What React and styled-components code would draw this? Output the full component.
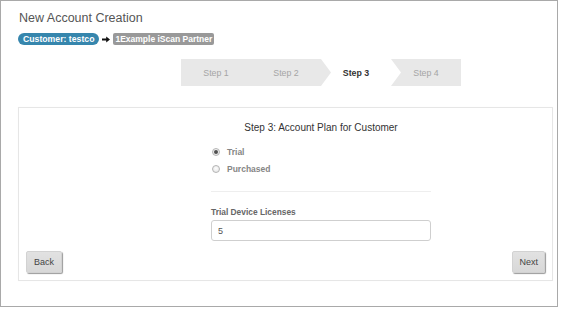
import React from "react";
import styled, { createGlobalStyle } from "styled-components";

const Global = createGlobalStyle`
  html, body { margin: 0; padding: 0; background: #fff; }
  body { font-family: "Liberation Sans", Arial, sans-serif; }
  * { box-sizing: border-box; }
`;

const Frame = styled.div`
  width: 558px;
  height: 307px;
  border: 1px solid #a9a9a9;
  padding: 9px 0 0 17px;
  display: flex;
  flex-direction: column;
`;

const Title = styled.h1`
  margin: 0 0 0 1px;
  font-size: 12.5px;
  line-height: 16px;
  font-weight: normal;
  color: #555;
`;

const Crumbs = styled.div`
  display: flex;
  align-items: center;
  gap: 3px;
  margin-top: 7px;
  height: 12px;
`;

const Badge = styled.span`
  display: inline-flex;
  align-items: center;
  height: 12px;
  padding: 0 ${(p) => (p.$pill ? "5px" : "2px")};
  border-radius: ${(p) => (p.$pill ? "6px" : "2px")};
  background: ${(p) => p.$bg};
  color: #fff;
  font-size: ${(p) => (p.$pill ? "8.7px" : "8.5px")};
  font-weight: bold;
  white-space: nowrap;
`;

const StepBar = styled.div`
  display: flex;
  width: 280px;
  height: 27px;
  margin: 14px 0 0 163px;
  background: #e8e8e8;
`;

const Step = styled.div`
  position: relative;
  z-index: ${(p) => (p.$active ? 1 : 0)};
  flex: none;
  width: ${(p) => (p.$active ? "80px" : "70px")};
  margin-right: ${(p) => (p.$active ? "-10px" : "0")};
  padding-right: ${(p) => (p.$active ? "10px" : "0")};
  display: flex;
  align-items: center;
  justify-content: center;
  font-size: 8.8px;
  font-weight: ${(p) => (p.$active ? "bold" : "normal")};
  color: ${(p) => (p.$active ? "#333" : "#a5a5a5")};
  background: ${(p) => (p.$active ? "#fff" : "transparent")};
  clip-path: ${(p) =>
    p.$active
      ? "polygon(0 0, calc(100% - 10px) 0, 100% 50%, calc(100% - 10px) 100%, 0 100%, 10px 50%)"
      : "none"};
`;

const Card = styled.div`
  width: 535px;
  height: 174px;
  margin-top: 21px;
  border: 1px solid #e6e6e6;
  box-shadow: 0 0 1px rgba(0, 0, 0, 0.04);
  display: flex;
  flex-direction: column;
  padding: 13px 0 0 0;
`;

const Column = styled.div`
  width: 220px;
  margin-left: 192px;
  display: flex;
  flex-direction: column;
`;

const Heading = styled.h2`
  margin: 0;
  font-size: 10px;
  line-height: 14px;
  font-weight: normal;
  color: #333;
  text-align: center;
  white-space: nowrap;
`;

const RadioGroup = styled.div`
  margin-top: 8px;
  display: flex;
  flex-direction: column;
`;

const RadioRow = styled.label`
  display: flex;
  align-items: center;
  gap: 7px;
  height: 17px;
  padding-left: 1px;
  font-size: 8.5px;
  font-weight: bold;
  color: #858585;
`;

const RadioDot = styled.span`
  width: 8px;
  height: 8px;
  border-radius: 50%;
  border: 1px solid #b4b4b4;
  background: radial-gradient(circle at 50% 40%, #fdfdfd, #e2e2e2);
  display: flex;
  align-items: center;
  justify-content: center;
  &::after {
    content: "";
    width: 4px;
    height: 4px;
    border-radius: 50%;
    background: ${(p) => (p.$checked ? "#505050" : "transparent")};
  }
`;

const Rule = styled.hr`
  margin: 14px 0 0 0;
  border: 0;
  border-top: 1px solid #eee;
`;

const FieldLabel = styled.div`
  margin-top: 14px;
  font-size: 8.4px;
  line-height: 12px;
  font-weight: bold;
  color: #666;
`;

const Input = styled.input`
  margin-top: 2px;
  width: 220px;
  height: 21px;
  border: 1px solid #cfcfcf;
  border-radius: 3px;
  padding: 0 6px;
  font-family: "Liberation Sans", Arial, sans-serif;
  font-size: 9px;
  color: #555;
  outline: none;
`;

const Actions = styled.div`
  margin-top: 10px;
  display: flex;
  justify-content: space-between;
  padding: 0 7px 0 7px;
`;

const Button = styled.button`
  height: 22px;
  padding: 0 ${(p) => p.$pad || "7px"};
  border: 1px solid #d2d2d2;
  border-radius: 2px;
  background: linear-gradient(#e2e2e2, #d8d8d8);
  box-shadow: 1px 1px 1px #9a9a9a;
  font-family: "Liberation Sans", Arial, sans-serif;
  font-size: 9px;
  color: #444;
`;

const Arrow = () => (
  <svg width="8" height="7" viewBox="0 0 8 7">
    <path d="M0 2.4 H4.2 V0.4 L8 3.5 L4.2 6.6 V4.6 H0 Z" fill="#111" />
  </svg>
);

export default function App() {
  return (
    <>
      <Global />
      <Frame>
        <Title>New Account Creation</Title>
        <Crumbs>
          <Badge $pill $bg="#3686ad">Customer: testco</Badge>
          <Arrow />
          <Badge $bg="#999">1Example iScan Partner</Badge>
        </Crumbs>
        <StepBar>
          <Step>Step 1</Step>
          <Step>Step 2</Step>
          <Step $active>Step 3</Step>
          <Step>Step 4</Step>
        </StepBar>
        <Card>
          <Column>
            <Heading>Step 3: Account Plan for Customer</Heading>
            <RadioGroup>
              <RadioRow>
                <RadioDot $checked />
                Trial
              </RadioRow>
              <RadioRow>
                <RadioDot />
                Purchased
              </RadioRow>
            </RadioGroup>
            <Rule />
            <FieldLabel>Trial Device Licenses</FieldLabel>
            <Input defaultValue="5" />
          </Column>
          <Actions>
            <Button $pad="7px">Back</Button>
            <Button $pad="6px">Next</Button>
          </Actions>
        </Card>
      </Frame>
    </>
  );
}
